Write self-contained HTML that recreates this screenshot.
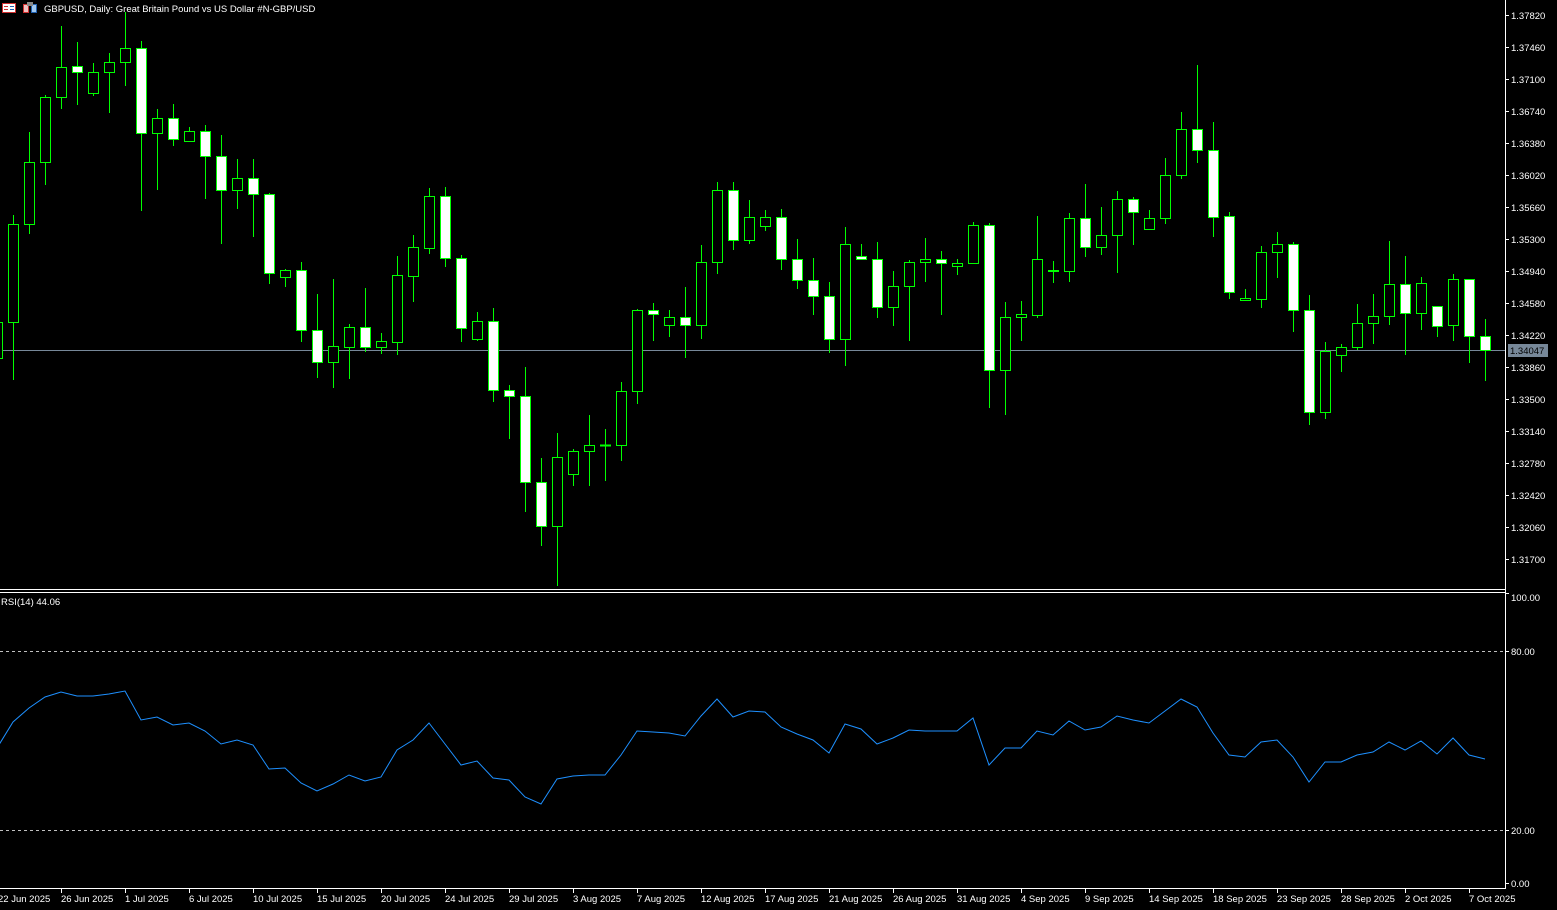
<!DOCTYPE html>
<html><head><meta charset="utf-8">
<style>
html,body{margin:0;padding:0;background:#000;width:1557px;height:910px;overflow:hidden}
svg{display:block}
text{font-family:"Liberation Sans",sans-serif;font-size:9.5px;fill:#fff}
</style></head>
<body>
<svg id="s" width="1557" height="910" viewBox="0 0 1557 910" xmlns="http://www.w3.org/2000/svg" shape-rendering="crispEdges">
<rect width="1557" height="910" fill="#000"/>
<!-- frames -->
<line x1="0" y1="589.5" x2="1505" y2="589.5" stroke="#fff"/>
<line x1="0" y1="592.5" x2="1505" y2="592.5" stroke="#fff"/>
<line x1="1505.5" y1="0" x2="1505.5" y2="889" stroke="#fff"/>
<line x1="0" y1="888.5" x2="1506" y2="888.5" stroke="#fff"/>
<!-- current price line -->
<line x1="0" y1="350.5" x2="1505" y2="350.5" stroke="#778899"/>
<!-- RSI levels -->
<line x1="0" y1="651.5" x2="1505" y2="651.5" stroke="#c0c0c0" stroke-dasharray="3,3"/>
<line x1="0" y1="830.5" x2="1505" y2="830.5" stroke="#c0c0c0" stroke-dasharray="3,3"/>
<g id="cd"></g>
<g id="ticks" stroke="#fff"></g>
<!-- header -->
<g>
<rect x="2.5" y="3.5" width="13" height="9" fill="#fff" stroke="#d03030"/>
<line x1="4" y1="6.5" x2="8" y2="6.5" stroke="#d03030"/><line x1="4" y1="9.5" x2="8" y2="9.5" stroke="#d03030"/>
<line x1="10" y1="6.5" x2="14" y2="6.5" stroke="#2060b0"/><line x1="10" y1="9.5" x2="14" y2="9.5" stroke="#2060b0"/>
<rect x="23.5" y="4.5" width="5" height="8" fill="#f0c0c0" stroke="#d03030"/>
<rect x="31.5" y="4.5" width="5" height="8" fill="#a0c8f0" stroke="#2060b0"/>
<rect x="27" y="2" width="6" height="4" fill="#888"/>
</g>
<text x="44" y="12">GBPUSD, Daily:  Great Britain Pound vs US Dollar #N-GBP/USD</text>
<text x="1" y="605">RSI(14) 44.06</text>
<!-- price labels -->
<g>
<text x="1511" y="19">1.37820</text><text x="1511" y="51">1.37460</text><text x="1511" y="83">1.37100</text>
<text x="1511" y="115">1.36740</text><text x="1511" y="147">1.36380</text><text x="1511" y="179">1.36020</text>
<text x="1511" y="211">1.35660</text><text x="1511" y="243">1.35300</text><text x="1511" y="275">1.34940</text>
<text x="1511" y="307">1.34580</text><text x="1511" y="339">1.34220</text><text x="1511" y="371">1.33860</text>
<text x="1511" y="403">1.33500</text><text x="1511" y="435">1.33140</text><text x="1511" y="467">1.32780</text>
<text x="1511" y="499">1.32420</text><text x="1511" y="531">1.32060</text><text x="1511" y="563">1.31700</text>
</g>
<rect x="1508" y="344" width="40" height="13" fill="#778899"/>
<text x="1510" y="354" style="fill:#000">1.34047</text>
<text x="1511" y="601">100.00</text>
<text x="1511" y="655">80.00</text>
<text x="1511" y="834">20.00</text>
<text x="1511" y="887">0.00</text>
<!-- date labels -->
<g>
<text x="-2" y="902">22 Jun 2025</text>
<text x="61" y="902">26 Jun 2025</text><text x="125" y="902">1 Jul 2025</text><text x="189" y="902">6 Jul 2025</text>
<text x="253" y="902">10 Jul 2025</text><text x="317" y="902">15 Jul 2025</text><text x="381" y="902">20 Jul 2025</text>
<text x="445" y="902">24 Jul 2025</text><text x="509" y="902">29 Jul 2025</text><text x="573" y="902">3 Aug 2025</text>
<text x="637" y="902">7 Aug 2025</text><text x="701" y="902">12 Aug 2025</text><text x="765" y="902">17 Aug 2025</text>
<text x="829" y="902">21 Aug 2025</text><text x="893" y="902">26 Aug 2025</text><text x="957" y="902">31 Aug 2025</text>
<text x="1021" y="902">4 Sep 2025</text><text x="1085" y="902">9 Sep 2025</text><text x="1149" y="902">14 Sep 2025</text>
<text x="1213" y="902">18 Sep 2025</text><text x="1277" y="902">23 Sep 2025</text><text x="1341" y="902">28 Sep 2025</text>
<text x="1405" y="902">2 Oct 2025</text><text x="1469" y="902">7 Oct 2025</text>
</g>
<polyline id="rsi" fill="none" stroke="#1e90ff" stroke-width="1" shape-rendering="auto" points=""/>
</svg>
<script>
var C=[
[-1,322,358,315,365,0],
[0,224,322,215,379,0],[1,162,224,132,233,0],[2,97,162,95,184,0],[3,67,97,26,108,0],[4,66,72,42,104,1],
[5,72,93,63,95,0],[6,62,72,53,112,0],[7,48,62,12,85,0],[8,48,133,41,210,1],[9,118,133,109,189,0],
[10,118,139,104,145,1],[11,131,141,127,141,0],[12,131,156,125,198,1],[13,156,190,135,243,1],[14,178,190,159,208,0],
[15,178,194,159,236,1],[16,194,273,193,283,1],[17,270,277,269,286,0],[18,270,330,262,341,1],[19,330,362,294,377,1],
[20,346,362,279,387,0],[21,327,347,324,378,0],[22,327,347,288,351,1],[23,341,347,333,353,0],[24,275,342,256,354,0],
[25,247,276,235,301,0],[26,196,248,188,253,0],[27,196,258,187,266,1],[28,258,328,255,341,1],[29,321,339,312,340,0],
[30,321,390,308,401,1],[31,390,396,385,438,1],[32,396,482,367,511,1],[33,482,526,458,545,1],[34,457,526,433,585,0],
[35,451,474,449,485,0],[36,445,451,415,485,0],[37,445,445,429,480,0],[38,391,445,382,460,0],[39,310,391,309,403,0],
[40,310,314,303,340,1],[41,317,325,310,336,0],[42,317,325,287,357,1],[43,262,325,245,338,0],[44,190,262,182,273,0],
[45,190,240,182,249,1],[46,217,240,200,243,0],[47,217,226,210,230,0],[48,217,259,209,269,1],[49,259,280,239,288,1],
[50,280,296,258,314,1],[51,296,339,282,352,1],[52,244,339,227,365,0],[53,256,259,244,259,1],[54,259,307,242,317,1],
[55,286,307,271,325,0],[56,262,286,260,340,0],[57,259,262,238,281,0],[58,259,263,251,314,1],[59,263,266,259,274,0],
[60,225,263,222,263,0],[61,225,370,223,407,1],[62,317,370,302,414,0],[63,314,317,301,340,0],[64,259,315,216,317,0],
[65,270,271,261,282,0],[66,218,271,213,281,0],[67,218,247,184,256,1],[68,235,247,207,254,0],[69,199,235,191,272,0],
[70,199,212,197,244,1],[71,218,229,210,229,0],[72,175,218,158,223,0],[73,129,175,112,178,0],[74,129,150,65,162,1],
[75,150,217,122,236,1],[76,216,292,212,298,1],[77,298,300,289,300,0],[78,252,299,246,307,0],[79,244,252,232,277,0],
[80,244,310,242,331,1],[81,310,412,295,424,1],[82,351,412,342,418,0],[83,347,355,344,371,0],[84,323,347,304,349,0],
[85,316,323,294,343,0],[86,284,316,241,324,0],[87,284,313,256,354,1],[88,283,313,277,329,0],[89,306,326,306,336,1],
[90,279,325,274,340,0],[91,279,336,279,362,1],[92,336,350,319,380,1]];
var g=document.getElementById('cd'),h='';
C.forEach(function(c){var x=13+16*c[0];
h+='<line x1="'+(x+0.5)+'" y1="'+c[3]+'" x2="'+(x+0.5)+'" y2="'+(c[4]+1)+'" stroke="#00ff00"/>';
if(c[2]-c[1]<1){h+='<line x1="'+(x-5)+'" y1="'+(c[1]+0.5)+'" x2="'+(x+6)+'" y2="'+(c[1]+0.5)+'" stroke="#00ff00" stroke-width="2"/>';}
else h+='<rect x="'+(x-4.5)+'" y="'+(c[1]+0.5)+'" width="10" height="'+(c[2]-c[1])+'" fill="'+(c[5]?'#fff':'#000')+'" stroke="#00ff00" stroke-width="1.4"/>';});
g.innerHTML=h;
var R=[[-3,748],[13,722],[29,708],[45,697],[61,692],[77,696],[93,696],[109,694],[125,691],[141,720],[157,717],[173,725],[189,723],[205,731],[221,744],[237,740],[253,745],[269,769],[285,768],[301,783],[317,791],[333,784],[349,775],[365,781],[381,777],[397,750],[413,740],[429,723],[445,744],[461,765],[477,761],[493,778],[509,780],[525,797],[541,804],[557,779],[573,776],[589,775],[605,775],[621,755],[637,731],[653,732],[669,733],[685,736],[701,716],[717,699],[733,717],[749,711],[765,712],[781,727],[797,734],[813,740],[829,753],[845,724],[861,729],[877,744],[893,738],[909,730],[925,731],[941,731],[957,731],[973,718],[989,765],[1005,748],[1021,748],[1037,731],[1053,735],[1069,721],[1085,730],[1101,727],[1117,716],[1133,720],[1149,723],[1165,711],[1181,699],[1197,707],[1213,733],[1229,755],[1245,757],[1261,742],[1277,740],[1293,757],[1309,782],[1325,762],[1341,762],[1357,755],[1373,752],[1389,742],[1405,750],[1421,741],[1437,754],[1453,738],[1469,755],[1485,759]];
document.getElementById('rsi').setAttribute('points',R.map(function(p){return p[0]+','+p[1]}).join(' '));
var t='';for(var k=0;k<18;k++){var y=15+32*k+0.5;t+='<line x1="1505" y1="'+y+'" x2="1509" y2="'+y+'"/>';}
[593.5,651.5,830.5,883.5].forEach(function(y){t+='<line x1="1505" y1="'+y+'" x2="1509" y2="'+y+'"/>';});
for(var k=0;k<23;k++){var x=61+64*k+0.5;t+='<line x1="'+x+'" y1="889" x2="'+x+'" y2="893"/>';}
document.getElementById('ticks').innerHTML=t;
</script>
</body></html>
